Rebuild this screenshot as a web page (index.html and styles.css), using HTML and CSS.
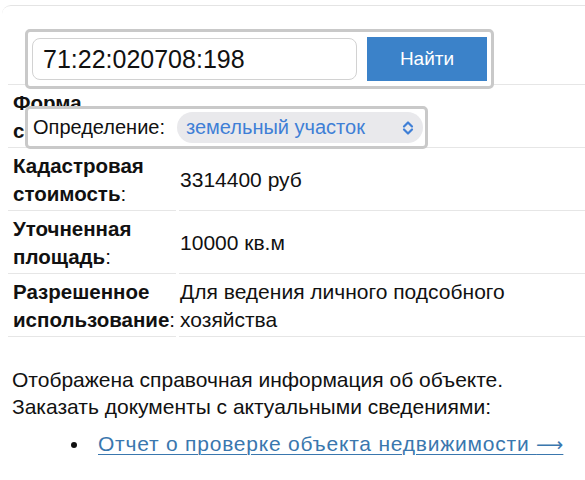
FILE: index.html
```html
<!DOCTYPE html>
<html lang="ru">
<head>
<meta charset="utf-8">
<title>Кадастровая справка</title>
<link rel="stylesheet" href="styles.css">
</head>
<body>
<div class="card">
  <table class="info">
    <tr>
      <td class="label"></td>
      <td class="value">71:22:020708:198<br>&nbsp;</td>
    </tr>
    <tr>
      <td class="label"><b>Форма собственности</b>:</td>
      <td class="value">Частная</td>
    </tr>
    <tr>
      <td class="label"><b>Кадастровая стоимость</b>:</td>
      <td class="value">3314400 руб</td>
    </tr>
    <tr>
      <td class="label"><b>Уточненная площадь</b>:</td>
      <td class="value">10000 кв.м</td>
    </tr>
    <tr>
      <td class="label"><b>Разрешенное использование</b>:</td>
      <td class="value">Для ведения личного подсобного хозяйства</td>
    </tr>
  </table>
  <p class="note">Отображена справочная информация об объекте.<br>Заказать документы с актуальными сведениями:</p>
  <ul class="links">
    <li><a href="#">Отчет о проверке объекта недвижимости <span class="arrow">⟶</span></a></li>
  </ul>

  <div class="overlay search-box">
    <input class="search-input" type="text" value="71:22:020708:198">
    <button class="search-btn" type="button">Найти</button>
  </div>

  <div class="overlay define-box">
    <span class="define-label">Определение:</span>
    <span class="select-pill">
      <span class="select-text">земельный участок</span>
      <svg class="chevron" width="12" height="16" viewBox="0 0 12 16" aria-hidden="true">
        <path d="M2 6.5 L6 2.5 L10 6.5" fill="none" stroke="#3f7fd6" stroke-width="2.2" stroke-linecap="round" stroke-linejoin="round"/>
        <path d="M2 9.5 L6 13.5 L10 9.5" fill="none" stroke="#3f7fd6" stroke-width="2.2" stroke-linecap="round" stroke-linejoin="round"/>
      </svg>
    </span>
  </div>
</div>
</body>
</html>
```
FILE: styles.css
```css
html, body {
  margin: 0;
  padding: 0;
  background: #ffffff;
  overflow: hidden;
}

body {
  font-family: "Liberation Sans", Arial, sans-serif;
  font-size: 21px;
  color: #111111;
  width: 585px;
  height: 480px;
}

.card {
  position: relative;
  margin: 5px 0 0 2px;
  width: 600px;
  border-top: 1px solid #e4e4e4;
  border-top-left-radius: 9px;
  padding: 16px 0 0 6px;
  box-sizing: border-box;
}

.info {
  width: 592px;
  border-collapse: separate;
  border-spacing: 3px 0;
  margin-left: -3px;
  line-height: 28px;
}

.info td {
  border-bottom: 1px solid #e6e6e6;
  padding: 4px 5px 2px 5px;
  vertical-align: middle;
}

.info td.label {
  width: 161px;
  padding-right: 1px;
  font-size: 20.5px;
}

.info td.value {
  padding-left: 1px;
  padding-right: 8px;
  font-size: 21px;
}

.note {
  margin: 29px 0 0 4px;
  line-height: 27px;
}

.links {
  margin: 10px 0 0 0;
  padding-left: 82px;
  line-height: 27px;
}

.links li {
  padding-left: 8px;
}

.links a {
  color: #3a77ae;
  text-decoration: underline;
  text-decoration-thickness: 1px;
  text-underline-offset: 3px;
  letter-spacing: 0.78px;
}

.arrow {
  font-family: "DejaVu Sans", sans-serif;
  font-size: 19px;
  letter-spacing: 0;
}

.overlay {
  position: absolute;
  background: #ffffff;
  border: 3px solid #c9c9c9;
  border-radius: 5px;
  box-sizing: border-box;
  display: flex;
  align-items: center;
}

.search-box {
  left: 23px;
  top: 23px;
  width: 469px;
  height: 60px;
  padding: 0 4px;
  gap: 10px;
}

.search-input {
  width: 325px;
  height: 42px;
  box-sizing: border-box;
  border: 1px solid #d2d2d2;
  border-radius: 8px;
  padding: 0 0 0 10px;
  font-family: "Liberation Sans", Arial, sans-serif;
  font-size: 25px;
  color: #111111;
  background: #ffffff;
  outline: none;
}

.search-btn {
  width: 120px;
  height: 44px;
  border: none;
  border-radius: 0;
  background: #3b82c9;
  color: #ffffff;
  font-family: "Liberation Sans", Arial, sans-serif;
  font-size: 19px;
  padding: 0;
}

.define-box {
  left: 23px;
  top: 100px;
  width: 403px;
  height: 43px;
  padding: 0 2px 0 5px;
}

.define-label {
  color: #111111;
  font-size: 20px;
  margin-right: 12px;
  white-space: nowrap;
}

.select-pill {
  flex: 1;
  height: 31px;
  background: #e9e9ec;
  border-radius: 16px;
  display: flex;
  align-items: center;
  justify-content: space-between;
  padding: 0 9px 0 9px;
}

.select-text {
  color: #3f7fd6;
  font-size: 20px;
  white-space: nowrap;
}

.chevron {
  display: block;
}
```
